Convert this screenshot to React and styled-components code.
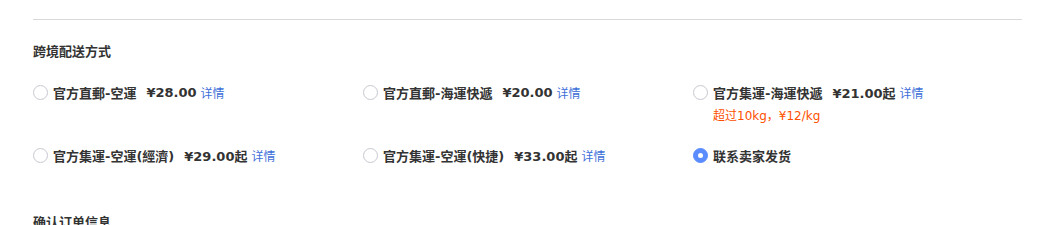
import React from "react";
import styled, { createGlobalStyle } from "styled-components";

const GlobalStyle = createGlobalStyle`
  body {
    margin: 0;
    background: #fff;
    font-family: "DejaVu Sans", "Noto Sans CJK SC", sans-serif;
    color: #333;
  }
`;

const Wrapper = styled.section`
  padding: 19px 24px 0 33px;
`;

const Divider = styled.div`
  height: 1px;
  background: #d9d9d9;
`;

const Title = styled.h3`
  margin: 22px 0 0;
  font-size: 13px;
  line-height: 20px;
  font-weight: bold;
  color: #333;
`;

const OptionGrid = styled.div`
  display: grid;
  grid-template-columns: 330px 330px 330px;
  row-gap: 19px;
  margin-top: 20px;
`;

const Option = styled.label`
  display: flex;
  flex-direction: column;
  cursor: pointer;
`;

const OptionLine = styled.div`
  display: flex;
  align-items: center;
  height: 20px;
`;

const Radio = styled.span`
  box-sizing: border-box;
  width: 15px;
  height: 15px;
  border-radius: 50%;
  border: 1px solid ${(p) => (p.checked ? "#5b8cff" : "#c8c8d0")};
  background: ${(p) => (p.checked ? "#5b8cff" : "#fff")};
  display: flex;
  align-items: center;
  justify-content: center;
  margin-right: 5px;
  flex-shrink: 0;

  &::after {
    content: "";
    display: ${(p) => (p.checked ? "block" : "none")};
    width: 5px;
    height: 5px;
    border-radius: 50%;
    background: #fff;
  }
`;

const Name = styled.span`
  font-size: 13px;
  font-weight: bold;
  color: #333;
`;

const Price = styled.span`
  margin-left: 10px;
  font-size: 13px;
  font-weight: bold;
  color: #333;
`;

const Detail = styled.a`
  margin-left: 4px;
  font-size: 12px;
  color: #3d6fd9;
  text-decoration: none;
`;

const Note = styled.div`
  margin: 4px 0 0 20px;
  font-size: 12px;
  line-height: 20px;
  color: #ff5000;
`;

const NextTitle = styled(Title)`
  margin-top: 48px;
`;

const options = [
  { name: "官方直郵-空運", price: "¥28.00" },
  { name: "官方直郵-海運快遞", price: "¥20.00" },
  { name: "官方集運-海運快遞", price: "¥21.00起", note: "超过10kg，¥12/kg" },
  { name: "官方集運-空運(經濟)", price: "¥29.00起" },
  { name: "官方集運-空運(快捷)", price: "¥33.00起" },
  { name: "联系卖家发货", checked: true },
];

export default function App() {
  return (
    <>
      <GlobalStyle />
      <Wrapper>
        <Divider />
        <Title>跨境配送方式</Title>
        <OptionGrid>
          {options.map((o) => (
            <Option key={o.name}>
              <OptionLine>
                <Radio checked={o.checked} />
                <Name>{o.name}</Name>
                {o.price && <Price>{o.price}</Price>}
                {o.price && <Detail>详情</Detail>}
              </OptionLine>
              {o.note && <Note>{o.note}</Note>}
            </Option>
          ))}
        </OptionGrid>
        <NextTitle>确认订单信息</NextTitle>
      </Wrapper>
    </>
  );
}
